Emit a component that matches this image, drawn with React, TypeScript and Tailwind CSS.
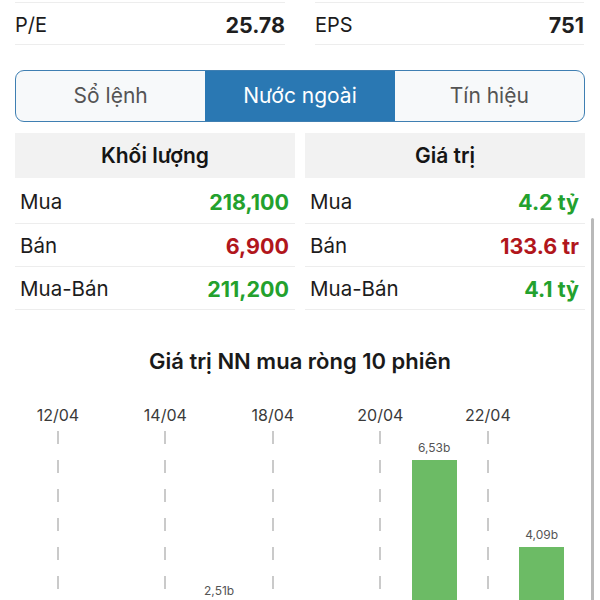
import React from "react";

type Session = { date: string; value: number };

const sessions: Session[] = [
  { date: "12/04", value: -3.2 },
  { date: "13/04", value: -1.1 },
  { date: "14/04", value: -0.35 },
  { date: "17/04", value: 2.51 },
  { date: "18/04", value: -0.8 },
  { date: "19/04", value: -2.4 },
  { date: "20/04", value: -0.6 },
  { date: "21/04", value: 6.53 },
  { date: "22/04", value: -1.7 },
  { date: "25/04", value: 4.09 },
];

const SCALE = 35.7;

const foreign = [
  { label: "Mua", vol: "218,100", val: "4.2 tỷ", up: true },
  { label: "Bán", vol: "6,900", val: "133.6 tr", up: false },
  { label: "Mua-Bán", vol: "211,200", val: "4.1 tỷ", up: true },
];

function StatCell({ label, value }: { label: string; value: string }) {
  return (
    <div className="flex h-[43px] items-center justify-between border-y border-[#ededed] pt-[3px]">
      <span className="text-[20px] text-[#1c1c1c]">{label}</span>
      <span className="text-[21.5px] font-bold text-[#1f1f1f]">{value}</span>
    </div>
  );
}

function ForeignColumn({ title, field }: { title: string; field: "vol" | "val" }) {
  return (
    <div className="flex flex-col">
      <div className="flex h-[45px] items-center justify-center bg-[#f2f2f2] text-[21px] font-semibold text-[#151515]">
        {title}
      </div>
      {foreign.map((row, i) => (
        <div
          key={row.label}
          className={
            i === 0
              ? "flex h-[46px] items-center justify-between border-b border-[#ededed] pl-[5px] pr-[6px] pt-[4px]"
              : "flex h-[43px] items-center justify-between border-b border-[#ededed] pl-[5px] pr-[6px] pt-[2px]"
          }
        >
          <span className="text-[20.5px] text-[#1c1c1c]">{row.label}</span>
          <span
            className={
              row.up
                ? "text-[21.5px] font-bold text-[#23a12d]"
                : "text-[21.5px] font-bold text-[#b1161c]"
            }
          >
            {row[field]}
          </span>
        </div>
      ))}
    </div>
  );
}

export default function App() {
  return (
    <div className="relative h-[600px] w-[600px] overflow-hidden bg-white font-['Inter','Noto_Sans',sans-serif]">
      <div className="px-[15px] pt-[2px]">
        <div className="grid grid-cols-[270px_269px] gap-x-[30px]">
          <StatCell label="P/E" value="25.78" />
          <StatCell label="EPS" value="751" />
        </div>

        <div className="mt-[25px] flex h-[52px] overflow-hidden rounded-[9px] border-[1.5px] border-[#3f7fb2] bg-[#f7f9fa] text-[21px]">
          <div className="flex flex-1 items-center justify-center text-[#545454]">Sổ lệnh</div>
          <div className="flex flex-1 items-center justify-center bg-[#2a78b3] text-white">Nước ngoài</div>
          <div className="flex flex-1 items-center justify-center text-[#545454]">Tín hiệu</div>
        </div>

        <div className="mt-[11px] grid grid-cols-2 gap-x-[10px]">
          <ForeignColumn title="Khối lượng" field="vol" />
          <ForeignColumn title="Giá trị" field="val" />
        </div>

        <div className="mt-[36px] text-center text-[22px] leading-[30px] font-semibold text-[#1a1a1a]">
          Giá trị NN mua ròng 10 phiên
        </div>

        <div className="mt-[29px] flex pl-[16px]">
          {sessions.map((s, i) => (
            <div key={s.date} className="flex w-[53.75px] shrink-0 flex-col items-center">
              <div className="h-[20px] text-[16px] leading-[20px] text-[#3a3a3a]">
                {i % 2 === 0 ? s.date : ""}
              </div>
              <div className="relative flex h-[268px] w-full flex-col items-center justify-end">
                {i % 2 === 0 && (
                  <svg className="absolute left-1/2 top-[6px] -ml-[1px] h-[262px] w-[2px]">
                    <line
                      x1="1"
                      y1="0"
                      x2="1"
                      y2="262"
                      stroke="#bdbdbd"
                      strokeWidth="1.6"
                      strokeDasharray="13 16"
                    />
                  </svg>
                )}
                {s.value > 0 && (
                  <>
                    <span className="mb-[5px] text-[12px] leading-[14px] text-[#555]">
                      {`${s.value.toFixed(2).replace(".", ",")}b`}
                    </span>
                    <div
                      className="relative w-[45px] bg-[#6cbb65]"
                      style={{ height: `${s.value * SCALE}px` }}
                    />
                  </>
                )}
              </div>
            </div>
          ))}
        </div>
      </div>

      <div className="absolute left-[591px] top-[218px] h-[400px] w-[3px] rounded-full bg-[#b9b9b9]" />
    </div>
  );
}
